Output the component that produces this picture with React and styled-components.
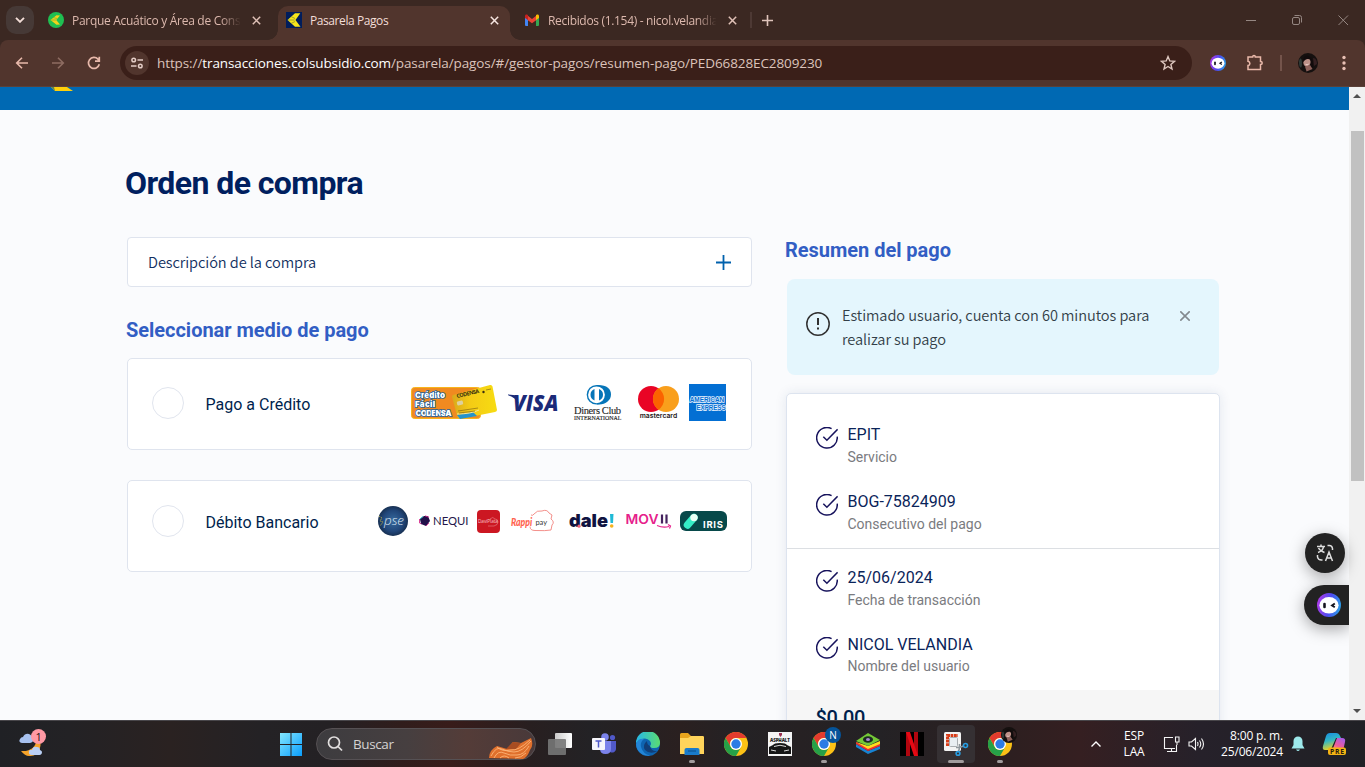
import React from "react";
import styled, { createGlobalStyle, css } from "styled-components";

const Global = createGlobalStyle`
  *, *::before, *::after { box-sizing: border-box; }
  html, body { margin: 0; padding: 0; overflow: hidden; }
  h1, h2, p { margin: 0; }
  svg { display: block; flex: none; }
`;

const ui = `"Open Sans", "Noto Sans", sans-serif`;
const body = `"Noto Sans CJK JP", "Noto Sans", sans-serif`;
const roboto = `Roboto, "Liberation Sans", sans-serif`;

const Screen = styled.div`
  width: 1365px;
  height: 767px;
  display: flex;
  flex-direction: column;
  overflow: hidden;
  font-family: ${ui};
`;

/* ---------- browser chrome ---------- */

const TabStrip = styled.div`
  height: 40px;
  flex: none;
  display: flex;
  align-items: flex-start;
  padding: 6px 0 0 6px;
  background: #3b2822;
`;

const TabSearch = styled.div`
  width: 28px;
  height: 28px;
  border-radius: 10px;
  background: #463936;
  display: grid;
  place-items: center;
`;

const Tab = styled.div`
  position: relative;
  width: ${(p) => p.$w}px;
  height: 34px;
  margin-left: ${(p) => p.$ml || 0}px;
  padding: 0 11px 6px 8px;
  display: flex;
  align-items: center;
  color: ${(p) => (p.$active ? "#f3ded8" : "#ddb9ae")};
  ${(p) =>
    p.$active &&
    css`
      background: #51352d;
      border-radius: 10px 10px 0 0;
      &::before,
      &::after {
        content: "";
        position: absolute;
        bottom: 0;
        width: 10px;
        height: 10px;
      }
      &::before {
        left: -10px;
        background: radial-gradient(circle at 0 0, transparent 9.5px, #51352d 10px);
      }
      &::after {
        right: -10px;
        background: radial-gradient(circle at 100% 0, transparent 9.5px, #51352d 10px);
      }
    `}
`;

const TabTitle = styled.span`
  width: 168px;
  margin: 2px 0 0 8px;
  font-size: 12px;
  line-height: 18px;
  letter-spacing: ${(p) => p.$ls || 0}px;
  white-space: nowrap;
  overflow: hidden;
  ${(p) => p.$fade && css`mask-image: linear-gradient(to right, #000 148px, transparent 169px);`}
`;

const TabClose = styled.span`
  margin-left: auto;
`;

const StripDivider = styled.span`
  width: 2px;
  height: 16px;
  margin: 6px 0 0 2px;
  background: #4d3934;
`;

const NewTab = styled.span`
  margin: 9px 0 0 10px;
`;

const WindowControls = styled.div`
  margin: 8px 16px 0 auto;
  display: flex;
  gap: 34px;
`;

const ToolbarWrap = styled.div`
  height: 47px;
  flex: none;
  background: #3b2822;
`;

const Toolbar = styled.div`
  height: 47px;
  display: flex;
  align-items: center;
  padding: 0 13px 1px 14px;
  background: #51352d;
  border-bottom: 1px solid #5b4139;
  border-radius: 8px 8px 0 0;
`;

const NavIcons = styled.div`
  width: 106px;
  display: flex;
  gap: 20px;
`;

const Omnibox = styled.div`
  width: 1072px;
  height: 34px;
  border-radius: 17px;
  background: #3a1f19;
  display: flex;
  align-items: center;
  padding: 0 16px 0 5px;
`;

const SiteInfo = styled.div`
  width: 24px;
  height: 24px;
  border-radius: 50%;
  background: #51352d;
  display: grid;
  place-items: center;
`;

const Url = styled.span`
  flex: 1;
  margin-left: 8px;
  font-size: 13.5px;
  line-height: 20px;
  letter-spacing: -0.1px;
  color: #dcc3bb;
  white-space: nowrap;
  b {
    font-weight: 400;
    color: #fff;
  }
`;

const Extensions = styled.div`
  flex: 1;
  display: flex;
  align-items: center;
  padding-left: 18px;
`;

const Puzzle = styled.svg`
  margin-left: 20px;
`;

const MenuDots = styled.svg`
  margin-left: 24px;
`;

const ToolDivider = styled.span`
  width: 2px;
  height: 16px;
  margin: 0 16px;
  background: #74544b;
`;

/* ---------- web page ---------- */

const Viewport = styled.div`
  height: 633px;
  flex: none;
  display: flex;
  position: relative;
`;

const Page = styled.div`
  width: 1349px;
  height: 633px;
  overflow: hidden;
  background: #fafbfd;
`;

const SiteHeader = styled.div`
  height: 23px;
  padding-left: 51px;
  background: #0069b3;
`;

const Content = styled.main`
  padding: 53px 0 0 125px;
  font-family: ${roboto};
`;

const Title = styled.h1`
  font-size: 32px;
  line-height: 40px;
  letter-spacing: -0.58px;
  font-weight: 700;
  color: #001f5f;
`;

const Columns = styled.div`
  display: flex;
  gap: 34px;
  padding: 34px 0 0 2px;
`;

const Left = styled.section`
  width: 625px;
`;

const Right = styled.section`
  width: 434px;
  padding-top: 1px;
`;

const Heading = styled.h2`
  margin-left: -1px;
  font-size: 20px;
  line-height: 24px;
  font-weight: 700;
  letter-spacing: -0.03px;
  color: #325ec4;
`;

const Accordion = styled.div`
  height: 50px;
  border: 1px solid #dfe4ee;
  border-radius: 4px;
  background: #fff;
  display: flex;
  align-items: center;
  justify-content: space-between;
  padding: 0 20px;
  margin-bottom: 31px;
  font-family: ${body};
  font-size: 14.6px;
  line-height: 24px;
  font-weight: 350;
  letter-spacing: -0.08px;
  color: #12305f;
`;

const Method = styled.div`
  height: 92px;
  margin-top: ${(p) => p.$mt}px;
  border: 1px solid #dfe4ee;
  border-radius: 5px;
  background: #fff;
  display: flex;
  padding: 27px 23px 0 24px;
`;

const Radio = styled.span`
  width: 32px;
  height: 32px;
  margin-top: ${(p) => p.$mt || 0}px;
  border: 1px solid #e1e5ee;
  border-radius: 50%;
  background: #fff;
`;

const MethodName = styled.span`
  margin: ${(p) => p.$mt}px 0 0 21.5px;
  font-size: 16px;
  line-height: 24px;
  font-weight: 400;
  color: #001f4d;
`;

const Logos = styled.div`
  height: 40px;
  margin: ${(p) => p.$mt}px ${(p) => p.$mr}px 0 auto;
  display: flex;
  align-items: center;
`;

const Logo = styled.svg`
  margin-left: ${(p) => p.$ml || 0}px;
  overflow: visible;
`;

const Notice = styled.div`
  width: 432px;
  height: 96px;
  margin: 17px 0 18px 1px;
  border-radius: 8px;
  background: #e4f6fd;
  display: flex;
  align-items: flex-start;
  padding: 24px 28px 0 19px;
  font-family: ${body};
  font-size: 14.6px;
  line-height: 24px;
  letter-spacing: -0.07px;
  color: #333f48;
  p {
    width: 330px;
    margin-left: 12px;
    font-weight: 350;
  }
`;

const NoticeIcon = styled.svg`
  margin-top: 9px;
`;

const NoticeClose = styled.svg`
  margin: 7.5px 0 0 8px;
`;

const Summary = styled.div`
  width: 434px;
  height: 420px;
  border: 1px solid #dde4ef;
  border-radius: 5px;
  background: #fff;
  box-shadow: 0 0 12px rgba(30, 60, 110, 0.1);
  overflow: hidden;
`;

const SummaryGroup = styled.div`
  height: ${(p) => p.$h}px;
  padding: ${(p) => p.$pt}px 0 0 29px;
  border-bottom: ${(p) => (p.$line ? "1px solid #dcdfe3" : "0")};
`;

const Entry = styled.div`
  height: 67px;
  display: flex;
  gap: 9.5px;
  svg { margin-top: 4px; }
`;

const EntryValue = styled.div`
  padding-top: 1px;
  font-size: 16px;
  line-height: 22px;
  color: #0a2459;
`;

const EntryLabel = styled.div`
  margin-top: ${(p) => p.$mt ?? 0}px;
  font-size: 14px;
  line-height: 22px;
  color: #7a7b80;
`;

const Total = styled.div`
  height: 140px;
  padding: 16px 28.5px;
  background: #f6f6f6;
  font-size: 20px;
  line-height: 24px;
  font-weight: 500;
  letter-spacing: -0.3px;
  color: #001f4d;
`;

const ScrollTrack = styled.div`
  width: 16px;
  background: #f1f1f1;
  display: flex;
  flex-direction: column;
  align-items: center;
  justify-content: space-between;
  padding: 7px 0;
`;

const ScrollThumb = styled.div`
  width: 13px;
  height: 350px;
  margin: 33px 0 auto 1px;
  background: #c1c1c1;
`;

const FloatButton = styled.div`
  position: absolute;
  right: ${(p) => p.$right}px;
  top: ${(p) => p.$top}px;
  width: ${(p) => p.$w}px;
  height: 40px;
  border-radius: ${(p) => (p.$pill ? "20px 0 0 20px" : "50%")};
  background: #222;
  box-shadow: 0 4px 16px rgba(0, 0, 0, 0.35);
  clip-path: ${(p) => (p.$pill ? "inset(-60px 0 -60px -60px)" : "none")};
  display: flex;
  align-items: center;
  justify-content: ${(p) => (p.$pill ? "flex-start" : "center")};
  padding-left: ${(p) => (p.$pill ? 13 : 0)}px;
`;

/* ---------- taskbar ---------- */

const Taskbar = styled.div`
  height: 47px;
  flex: none;
  display: flex;
  align-items: center;
  border-top: 1px solid #48464a;
  background: linear-gradient(
    to right,
    #202125 0, #232225 70px, #2a2221 170px, #242225 260px, #242124 330px,
    #301d1c 400px, #381c1a 450px, #281f20 530px, #232225 590px, #2a2020 680px,
    #242225 740px, #262123 800px, #242225 880px, #2d1f20 1010px, #351f21 1080px,
    #26212a 1200px, #202125 1365px
  );
  color: #fff;
`;

const Weather = styled.div`
  width: 269px;
  flex: none;
  padding-left: 18px;
`;

const AppSlot = styled.div`
  width: 44px;
  height: 46px;
  flex: none;
  display: grid;
  place-items: center;
  position: relative;
`;

const SnipTile = styled.div`
  width: 38px;
  height: 38px;
  border-radius: 4px;
  background: #353033;
  display: grid;
  place-items: center;
`;

const RunMark = styled.span`
  position: absolute;
  left: ${(p) => 22 - p.$w / 2}px;
  bottom: 4px;
  width: ${(p) => p.$w}px;
  height: 3px;
  border-radius: 2px;
  background: #a19c9d;
`;

const Search = styled.div`
  width: 220px;
  height: 32px;
  flex: none;
  margin: 0 2px 0 3px;
  border-radius: 16px;
  border: 1px solid #565154;
  background: linear-gradient(to right, #3d3c3f 0, #463f40 90px, #543c38 150px, #48393a 220px);
  display: flex;
  align-items: center;
  padding: 0 1px 0 10px;
  span {
    margin-left: 10px;
    font-size: 13.5px;
    line-height: 20px;
    letter-spacing: -0.4px;
    color: #d5d2d2;
  }
  svg:last-child { margin: 8px 0 0 auto; }
`;

const Tray = styled.div`
  flex: 1;
  display: flex;
  align-items: center;
  padding-left: 69px;
`;

const TrayText = styled.div`
  width: ${(p) => p.$w}px;
  margin-left: ${(p) => p.$ml}px;
  font-size: 12px;
  line-height: 16px;
  text-align: ${(p) => p.$align};
  letter-spacing: -0.18px;
  white-space: nowrap;
`;

const TrayIcon = styled.div`
  margin-left: ${(p) => p.$ml}px;
`;

/* ---------- drawings ---------- */

const Cross = ({ s = 9, c = "#e0c1b7", w = 1.5 }) => (
  <svg width={s} height={s} viewBox="0 0 9 9" stroke={c} strokeWidth={w} fill="none">
    <path d="M.8.8l7.4 7.4M8.2.8L.8 8.2" />
  </svg>
);

const Plus = ({ s, c, w }) => (
  <svg width={s} height={s} viewBox={`0 0 ${s} ${s}`} stroke={c} strokeWidth={w}>
    <path d={`M0 ${s / 2}H${s}M${s / 2} 0V${s}`} />
  </svg>
);

const ParkFavicon = () => (
  <svg width="16" height="16" viewBox="0 0 16 16">
    <circle cx="8" cy="8" r="8" fill="#1fbf52" />
    <path d="M2.500 8l6-4.800 3.500.3-3.800 4.500 3.800 4.500-3.500.3z" fill="#f2d21b" />
    <path d="M2 8h6M5 5.500l4 1" stroke="#7ab52c" strokeWidth=".7" />
  </svg>
);

const PagosFavicon = () => (
  <svg width="16" height="16" viewBox="0 0 16 16">
    <path fill="#001d5c" d="M0 0h16v16H0z" />
    <path d="M1.500 8L9 1.200h5.300L9.500 8l5 6.800H9z" fill="#f6e51b" />
    <path d="M2 8h6.500M5 4.500l4 2M5 11.500l4-2" stroke="#7d8430" strokeWidth=".7" />
  </svg>
);

const Gmail = () => (
  <svg width="16" height="16" viewBox="0 0 16 16">
    <path fill="#4285f4" d="M1 5l3 2v7H2a1 1 0 0 1-1-1z" />
    <path fill="#34a853" d="M15 5l-3 2v7h2a1 1 0 0 0 1-1z" />
    <path fill="#ea4335" d="M3.500 3.500L8 7l4.500-3.500V8L8 11.200 3.500 8z" />
    <path fill="#c5221f" d="M1 6V4c0-1.700 1.500-2 2.500-1.200L4 3.200V8z" />
    <path fill="#fbbc04" d="M15 6V4c0-1.700-1.500-2-2.500-1.200l-.5.4V8z" />
  </svg>
);

const Bot = ({ s }) => (
  <svg width={s} height={s} viewBox="0 0 24 24">
    <defs>
      <linearGradient id={`bot${s}`} x1="0" y1=".6" x2="1" y2=".8">
        <stop offset="0" stopColor="#a63be8" />
        <stop offset=".5" stopColor="#4b4cf0" />
        <stop offset="1" stopColor="#27a8e6" />
      </linearGradient>
    </defs>
    <circle cx="12" cy="12" r="12" fill={`url(#bot${s})`} />
    <ellipse cx="12" cy="12.300" rx="9.600" ry="8.300" fill="#fff" />
    <path d="M7.500 11v3" stroke="#15151f" strokeWidth="2.600" strokeLinecap="round" />
    <path d="M17.800 10.500l-2.800 2 2.800 1.800" stroke="#15151f" strokeWidth="1.900" fill="none" />
  </svg>
);

const Face = ({ s }) => (
  <svg width={s} height={s} viewBox="0 0 20 20">
    <circle cx="10" cy="10" r="10" fill="#15100f" />
    <path d="M1 8c1-4 3-3 3 2s-1 5-2 4-1-3-1-6z" fill="#2e3936" />
    <path d="M15 5c3 0 4 3 4 6l-3 2z" fill="#352022" />
    <ellipse cx="9" cy="9" rx="3.600" ry="4.600" fill="#bd9188" transform="rotate(15 9 9)" />
    <path d="M7 13.500l5-1.500 2.500 4-6 2.500z" fill="#8e625b" />
    <path d="M5 9C5 4 8 1 12 4c3 2 3 6 3 11l-2-2c0-4 0-7-3-7-2 0-3 1-5 3z" fill="#120b0c" />
    <path d="M7.500 11.300q1.500 1.200 3.200-.2" stroke="#f1d8d2" strokeWidth=".9" fill="none" />
  </svg>
);

const CheckMark = () => (
  <svg width="22" height="22" viewBox="0 0 22 22" fill="none" stroke="#17135c" strokeWidth="1.500">
    <path d="M15.600 1.600A10.300 10.300 0 1 0 21.200 9.700" />
    <path d="M7.300 9.800l3.600 3.500L21.600 2.400" />
  </svg>
);

const Chrome = () => (
  <svg width="24" height="24" viewBox="0 0 24 24">
    <circle cx="12" cy="12" r="12" fill="#fbc116" />
    <path d="M1.600 6A12 12 0 0 1 22.400 6H12a6 6 0 0 0-5.200 9z" fill="#e33b2e" />
    <path d="M1.600 6A12 12 0 0 0 12 24l5.200-9A6 6 0 0 1 6.800 15z" fill="#26a148" />
    <circle cx="12" cy="12" r="6" fill="#fff" />
    <circle cx="12" cy="12" r="4.700" fill="#2c7be5" />
  </svg>
);

const Badge = styled.span`
  position: absolute;
  left: ${(p) => p.$x}px;
  top: ${(p) => p.$y}px;
  width: 16px;
  height: 16px;
  border-radius: 50%;
  background: ${(p) => p.$bg || "none"};
  display: grid;
  place-items: center;
  font-size: 10px;
  line-height: 16px;
  color: #fff;
`;

const BrowserTop = () => (
  <>
    <TabStrip>
      <TabSearch>
        <svg width="10" height="6" viewBox="0 0 10 6" fill="none" stroke="#f3ded8" strokeWidth="1.900"><path d="M1 .8l4 4 4-4" /></svg>
      </TabSearch>
      <Tab $w={232} $ml={6}>
        <ParkFavicon />
        <TabTitle $fade $ls={-0.3}>Parque Acuático y Área de Conservación</TabTitle>
        <TabClose><Cross /></TabClose>
      </Tab>
      <Tab $w={232} $active $ml={6}>
        <PagosFavicon />
        <TabTitle $ls={-0.42}>Pasarela Pagos</TabTitle>
        <TabClose><Cross c="#f7e6e1" /></TabClose>
      </Tab>
      <Tab $w={232} $ml={6}>
        <Gmail />
        <TabTitle $fade $ls={-0.32}>Recibidos (1.154) - nicol.velandia</TabTitle>
        <TabClose><Cross /></TabClose>
      </Tab>
      <StripDivider />
      <NewTab><Plus s={11} c="#dfc4bb" w={1.6} /></NewTab>
      <WindowControls>
        <svg width="12" height="12" stroke="#958782" fill="none"><path d="M1 6.500h10" /></svg>
        <svg width="12" height="12" stroke="#958782" fill="none"><rect x="1.500" y="3.500" width="7" height="7" rx="1.500" /><path d="M3.500 1.500h5a2 2 0 0 1 2 2v5" /></svg>
        <svg width="12" height="12" stroke="#958782" fill="none"><path d="M1.500 1.500l9.500 9.500M11 1.500L1.500 11" /></svg>
      </WindowControls>
    </TabStrip>
    <ToolbarWrap>
      <Toolbar>
        <NavIcons>
          <svg width="16" height="16" stroke="#e8b9ab" strokeWidth="1.600" fill="none"><path d="M14 8H3M8 2.700L2.700 8 8 13.300" /></svg>
          <svg width="16" height="16" stroke="#8e6c62" strokeWidth="1.600" fill="none"><path d="M2 8h11M8 2.700L13.300 8 8 13.300" /></svg>
          <svg width="16" height="16" stroke="#e8b9ab" strokeWidth="1.700" fill="none"><path d="M13.300 9.300A5.500 5.500 0 1 1 12 4.200L13.300 5.700M13.300 1.800v4.400H9" /></svg>
        </NavIcons>
        <Omnibox>
          <SiteInfo>
            <svg width="14" height="14" stroke="#e4cdc6" strokeWidth="1.500" fill="none"><circle cx="3.700" cy="4" r="1.800" /><path d="M7.500 4H13M1 10h5.500" /><circle cx="10.300" cy="10" r="1.800" /></svg>
          </SiteInfo>
          <Url>https://<b>transacciones.colsubsidio.com</b>/pasarela/pagos/#/gestor-pagos/resumen-pago/PED66828EC2809230</Url>
          <svg width="16" height="16" viewBox="0 0 16 16" fill="none" stroke="#dec7bf" strokeWidth="1.400"><path d="M8 1.600l1.800 4.300 4.700.4-3.600 3.100 1.100 4.600L8 11.500 4 14l1.100-4.600L1.500 6.300l4.700-.4z" /></svg>
        </Omnibox>
        <Extensions>
          <Bot s={16} />
          <Puzzle width="18" height="18" viewBox="0 0 18 18" fill="none" stroke="#eab9aa" strokeWidth="1.500">
            <path d="M2 3h4.700C6.700 1 9.300 1 9.300 3H14.500v4.500c2.300 0 2.300 3 0 3v5H2V11.500c2.500-.3 2.500-3.800 0-4.200z" />
          </Puzzle>
          <ToolDivider />
          <Face s={20} />
          <MenuDots width="4" height="16" fill="#e8c0b4"><circle cx="2" cy="2.500" r="1.700" /><circle cx="2" cy="8" r="1.700" /><circle cx="2" cy="13.500" r="1.700" /></MenuDots>
        </Extensions>
      </Toolbar>
    </ToolbarWrap>
  </>
);

const CreditLogos = () => (
  <Logos $mt={-4} $mr={2}>
    <Logo width="86" height="36" viewBox="0 0 86 36">
      <defs>
        <linearGradient id="gold" x1="0" y1="0" x2="1" y2="0"><stop offset="0" stopColor="#d9a81c" /><stop offset=".4" stopColor="#f4cb15" /><stop offset="1" stopColor="#f7dc12" /></linearGradient>
      </defs>
      <rect x=".5" y="3.500" width="69" height="31" rx="3" fill="#f08a20" stroke="#f8b51c" />
      <path d="M42 11L79 1q2-.4 2.500 1.500L86 26q0 1.500-2 2L49 35q-2 0-2.500-2L41 13q0-1.500 1-2z" fill="url(#gold)" />
      <path d="M46 31l16-3 4 4-17 3z" fill="#2593cc" />
      <path d="M46 30q14 0 22-4" stroke="#f7e798" fill="none" />
      <rect x="46" y="17" width="6" height="4" rx="1" fill="#ddd1a0" transform="rotate(-13 49 19)" />
      <path d="M47 27l20-3M75 6l5-1M48 29l16-2" stroke="#876c14" strokeWidth=".7" />
      <circle cx="72.500" cy="8" r="1.200" fill="#382d12" />
      <text x="46" y="14" fontSize="5.500" fontWeight="700" fontFamily="Open Sans" textLength="23" transform="rotate(-13 46 14)" fill="#3b3010">CODENSA</text>
      <g fontFamily="Inter, sans-serif" fontWeight="900" fontSize="8" fill="#fff" stroke="#24629a" strokeWidth="1.500" paintOrder="stroke">
        <text x="4" y="14" textLength="30">Crédito</text>
        <text x="4" y="23" textLength="20">Fácil</text>
        <text x="4.500" y="31.500" textLength="36">CODENSA</text>
      </g>
    </Logo>
    <Logo $ml={11} width="50" height="18" viewBox="0 0 50 18">
      <text x="5" y="17.500" fontFamily="Open Sans" fontWeight="800" fontStyle="italic" fontSize="22.500" textLength="45.500" lengthAdjust="spacingAndGlyphs" fill="#1b2a78">VISA</text>
      <path d="M0 1.500q6 0 8.500 1.500l2 7Q7 4.500 0 2.300z" fill="#1b2a78" />
    </Logo>
    <Logo $ml={16} width="48" height="36" viewBox="0 0 48 36">
      <path d="M24 1c9 0 13 4 13 9.500S32 20.500 25 20.500h-2V1z" fill="#0675b8" />
      <circle cx="22.500" cy="10.800" r="9.800" fill="#0675b8" />
      <circle cx="22.500" cy="10.800" r="8.400" fill="#fff" />
      <path d="M20.500 5v11.600a6.200 6.200 0 0 1 0-11.600zM25 5v11.600a6.200 6.200 0 0 0 0-11.600z" fill="#0675b8" />
      <g fontFamily="Liberation Serif, serif" fill="#242424">
        <text x="0" y="30" fontSize="10.500" textLength="47" stroke="#242424" strokeWidth=".1">Diners Club</text>
        <text x="0" y="36" fontSize="6.300" textLength="47.500" lengthAdjust="spacingAndGlyphs" stroke="#242424" strokeWidth=".15">INTERNATIONAL</text>
      </g>
    </Logo>
    <Logo $ml={16} width="41" height="34" viewBox="0 0 41 34">
      <circle cx="13" cy="14" r="13" fill="#e90425" />
      <circle cx="28" cy="14" r="13" fill="#f99f1c" />
      <path d="M20.500 3.300a13 13 0 0 1 0 21.400 13 13 0 0 1 0-21.400z" fill="#fb6300" />
      <text x="1.700" y="33" fontFamily="Inter, sans-serif" fontWeight="600" fontSize="6.600" textLength="37.500" lengthAdjust="spacingAndGlyphs" fill="#1e1717">mastercard</text>
    </Logo>
    <Logo $ml={10} width="37" height="37" viewBox="0 0 37 37">
      <path fill="#036fd3" d="M0 0h37v37H0z" />
      <g fontFamily="Liberation Sans, sans-serif" fontWeight="700" fontSize="6.500" fill="#036fd3" stroke="#e7f2fd" strokeWidth="1.400" paintOrder="stroke">
        <text x=".7" y="17.800" textLength="34.500" lengthAdjust="spacingAndGlyphs">AMERICAN</text>
        <text x="7.500" y="25.700" textLength="29" lengthAdjust="spacingAndGlyphs">EXPRESS</text>
      </g>
    </Logo>
  </Logos>
);

const DebitLogos = () => (
  <Logos $mt={-7} $mr={1}>
    <Logo width="30" height="30" viewBox="0 0 30 30">
      <defs><radialGradient id="pse"><stop offset="0" stopColor="#376a9e" /><stop offset=".7" stopColor="#214679" /><stop offset="1" stopColor="#173052" /></radialGradient></defs>
      <circle cx="15" cy="15" r="15" fill="url(#pse)" />
      <path d="M1 10l3 2-2 3 3 1-3 4" stroke="#9d9b50" fill="none" strokeDasharray="1.500 .7" />
      <text x="6" y="18.500" fontFamily="Open Sans" fontStyle="italic" fontWeight="300" fontSize="13" textLength="20" lengthAdjust="spacingAndGlyphs" fill="#dbe6f2">pse</text>
    </Logo>
    <Logo $ml={11} width="50" height="12" viewBox="0 0 50 12">
      <path d="M1 4l4-3h4l2 5-4 5-5-2z" fill="#22104a" />
      <path d="M.5 4v4l2 1M6 .8l4 1.500M10 8l-3 3" stroke="#d6308d" strokeWidth=".9" fill="none" />
      <path d="M1 4l3-2.500" stroke="#29bfc7" />
      <text x="14" y="10" fontFamily="Lato, sans-serif" fontSize="10.800" textLength="35.500" lengthAdjust="spacingAndGlyphs" fill="#24164a">NEQUI</text>
    </Logo>
    <Logo $ml={8} width="23" height="23" viewBox="0 0 23 23">
      <rect width="23" height="23" rx="4" fill="#cc1722" />
      <path d="M13 9q3-3 5 0 3 0 3 3t-4 4h-6" stroke="#ed9b9f" strokeWidth=".5" fill="none" />
      <text x="1" y="13.200" fontFamily="Open Sans" fontSize="4.800" textLength="20" fill="#f7c3c6">DaviPlata</text>
    </Logo>
    <Logo $ml={11} width="43" height="22" viewBox="0 0 43 22">
      <path d="M20 5q2 1 3-1 3-4 8-3 5-2 7 2l3 2-1 4q4 3 1 6l-1 5q-5 1-16 .5-5 0-5-4" fill="none" stroke="#f0746d" strokeWidth=".8" />
      <text transform="translate(0 16) scale(1 1.300)" fontFamily="Lato, sans-serif" fontStyle="italic" fontWeight="900" fontSize="8.700" fill="#ff634f">Rappi</text>
      <text x="24.500" y="14.500" fontFamily="Lato, sans-serif" fontSize="7.500" textLength="11.500" fill="#383838">pay</text>
    </Logo>
    <Logo $ml={15} width="44" height="16" viewBox="0 0 44 16">
      <text x="0" y="14.200" fontFamily="Inter, sans-serif" fontWeight="900" fontSize="18" textLength="39" lengthAdjust="spacingAndGlyphs" fill="#101341">dale</text>
      <path d="M41 1h3.500l-.5 9h-2.500z" fill="#1fbad6" />
      <circle cx="42.700" cy="13" r="1.800" fill="#f4b31d" />
      <circle cx="10" cy="13.200" r="1.600" fill="#ef647b" />
    </Logo>
    <Logo $ml={13} width="45" height="16" viewBox="0 0 45 16">
      <text x="-.5" y="11" fontFamily="Inter, sans-serif" fontWeight="600" fontSize="13" textLength="33" lengthAdjust="spacingAndGlyphs" fill="#e6208b">MOV</text>
      <path d="M36 1.500v9M40.500 1.500v9" stroke="#45235f" strokeWidth="2.200" />
      <path d="M31 12.500q6 2.500 12 1M42 11.500l2.500 1.500-1 2.500" stroke="#e6208b" strokeWidth="1.200" fill="none" />
    </Logo>
    <Logo $ml={9} width="47" height="20" viewBox="0 0 47 20">
      <rect width="47" height="20" rx="6" fill="#07494a" />
      <path d="M7.500 14L14 6.500" stroke="#35edc6" strokeWidth="7.500" strokeLinecap="round" />
      <circle cx="14" cy="6.600" r="3.700" fill="#eafff5" />
      <text x="23" y="17" fontFamily="Inter, sans-serif" fontWeight="700" fontSize="9.500" textLength="20" fill="#fff">IRIS</text>
    </Logo>
  </Logos>
);

const Item = ({ value, label, mt }) => (
  <Entry>
    <CheckMark />
    <div>
      <EntryValue>{value}</EntryValue>
      <EntryLabel $mt={mt}>{label}</EntryLabel>
    </div>
  </Entry>
);

const PaymentPage = () => (
  <Viewport>
    <Page>
      <SiteHeader>
        <svg width="22" height="4" viewBox="0 0 22 4"><path d="M0 0h16l6 4H4z" fill="#ffd00a" /><path d="M0 0h3l1 4z" fill="#5f8555" /></svg>
      </SiteHeader>
      <Content>
        <Title>Orden de compra</Title>
        <Columns>
          <Left>
            <Accordion>Descripción de la compra<Plus s={15} c="#0061ad" w={1.8} /></Accordion>
            <Heading>Seleccionar medio de pago</Heading>
            <Method $mt={16}>
              <Radio $mt={0.5} />
              <MethodName $mt={7}>Pago a Crédito</MethodName>
              <CreditLogos />
            </Method>
            <Method $mt={30}>
              <Radio $mt={-3.5} />
              <MethodName $mt={3}>Débito Bancario</MethodName>
              <DebitLogos />
            </Method>
          </Left>
          <Right>
            <Heading>Resumen del pago</Heading>
            <Notice>
              <NoticeIcon width="24" height="24" viewBox="0 0 24 24" fill="none" stroke="#303030" strokeWidth="1.500"><circle cx="12" cy="12" r="11.200" /><path d="M12 6v7M12 15.500v2" strokeWidth="2" /></NoticeIcon>
              <p>Estimado usuario, cuenta con 60 minutos para realizar su pago</p>
              <NoticeClose width="10" height="10" viewBox="0 0 10 10" stroke="#83898e" strokeWidth="1.600"><path d="M.3.3l9.400 9.400M9.700.3L.3 9.700" /></NoticeClose>
            </Notice>
            <Summary>
              <SummaryGroup $h={155} $pt={29} $line>
                <Item value="EPIT" label="Servicio" />
                <Item value="BOG-75824909" label="Consecutivo del pago" />
              </SummaryGroup>
              <SummaryGroup $h={141} $pt={17}>
                <Item value="25/06/2024" label="Fecha de transacción" />
                <Item value="NICOL VELANDIA" label="Nombre del usuario" mt={-1} />
              </SummaryGroup>
              <Total>$0.00</Total>
            </Summary>
          </Right>
        </Columns>
      </Content>
    </Page>
    <ScrollTrack>
      <svg width="8" height="4"><path d="M0 4l4-4 4 4z" fill="#505050" /></svg>
      <ScrollThumb />
      <svg width="8" height="4"><path d="M0 0l4 4 4-4z" fill="#505050" /></svg>
    </ScrollTrack>
    <FloatButton $right={20} $top={446} $w={40}>
      <svg width="18" height="18" viewBox="0 0 18 18" fill="none" stroke="#dedede" strokeWidth="1.500">
        <path d="M1 2.500h8M5 .5v2M2 8.500Q7 7 7.500 2.500M2.500 4Q4 7 8.500 8.500M11.500 1.500h2q2.500 0 3 3v1.500M1.500 11v2q.5 3 4 3h1M9.500 17l3.500-9 3.500 9M10.700 14h4.600" />
      </svg>
    </FloatButton>
    <FloatButton $right={16} $top={498} $w={45} $pill><Bot s={24} /></FloatButton>
  </Viewport>
);

const WindowsBar = () => (
  <Taskbar>
    <Weather>
      <svg width="30" height="30" viewBox="0 0 30 30">
        <path d="M19 10q5 3 3 9-3 9-11 8-4 0-8-5 14 1 16-12z" fill="#f5a32a" />
        <path d="M4 14q-4-1-2-4 1-2 3-2 2-4 6-3 3 1 3 4 3 4-2 5z" fill="#a7c1ef" />
        <path d="M14 26q-4 0-3-4 1-2 3-1 1-4 5-3 3 0 3 3 3 1 1.500 4-1 1-2 1z" fill="#b9cff5" />
        <circle cx="20.500" cy="7.500" r="7.500" fill="#ff99a4" />
        <text x="17.500" y="11.500" fontFamily="Open Sans" fontSize="11" fill="#1c1113">1</text>
      </svg>
    </Weather>
    <AppSlot>
      <svg width="24" height="24" viewBox="0 0 24 24">
        <defs><linearGradient id="win" x1="0" y1="0" x2="1" y2="1"><stop offset="0" stopColor="#83e7ff" /><stop offset="1" stopColor="#0a9dfb" /></linearGradient></defs>
        <path fill="url(#win)" d="M1 1h10.500v11H1zM12.500 1H23v11H12.500zM1 13h10.500v11H1zM12.500 13H23v11H12.500z" />
      </svg>
    </AppSlot>
    <Search>
      <svg width="16" height="16" fill="none" stroke="#e2dfdf" strokeWidth="1.700"><circle cx="7" cy="6.500" r="5.500" /><path d="M11 10.500l4 4" /></svg>
      <span>Buscar</span>
      <svg width="46" height="22" viewBox="0 0 46 22">
        <path d="M1 21q0-8 8-12l10 3 6-7 8 1 10-5q3 7-1 12-3 8-7 9z" fill="#e0702c" />
        <path d="M18 12l7-7 8 1-5 6z" fill="#a84d22" />
        <path d="M3 19q5-10 11-7t12 3q8 0 17-11M6 21q4-8 10-5t13 2q7 0 12-9M12 21q4-4 9 0M27 21q6 0 11-5M9 10q5 5 14 3 7 1 19-10" stroke="#ffbc80" strokeWidth=".8" fill="none" />
      </svg>
    </Search>
    <AppSlot>
      <svg width="26" height="24" viewBox="0 0 26 24"><defs><linearGradient id="tv"><stop stopColor="#c9c9c9" /><stop offset="1" stopColor="#fff" /></linearGradient></defs><rect x="8" y="1" width="17" height="15" rx="1" fill="url(#tv)" /><rect x="1" y="7" width="18" height="16" rx="1" fill="#777" opacity=".9" /></svg>
    </AppSlot>
    <AppSlot>
      <svg width="24" height="24" viewBox="0 0 24 24"><circle cx="13" cy="5" r="3.800" fill="#7b83eb" /><circle cx="20.500" cy="5.500" r="2.600" fill="#5059c9" /><path d="M16 9h8v7a4 4 0 0 1-6 4z" fill="#5059c9" /><path d="M8 9h11v8q0 5-5.500 5T8 17z" fill="#7b83eb" /><rect x="0" y="6" width="13" height="12" rx="1" fill="#f6f6fb" /><path d="M3.500 9h6M6.500 9v6.500" stroke="#5059c9" strokeWidth="1.500" /></svg>
    </AppSlot>
    <AppSlot>
      <svg width="24" height="24" viewBox="0 0 24 24"><defs><linearGradient id="edge" x2="1"><stop stopColor="#26b7e8" /><stop offset="1" stopColor="#5bdc70" /></linearGradient></defs><circle cx="12" cy="12" r="12" fill="#0e64b1" /><path d="M0 11A12 12 0 0 1 24 11q0 5-6 5-4 0-4-2 2-2 0-5Q9 3 0 11z" fill="url(#edge)" /><path d="M0 12q2-6 8-5-4 3-3 8 2 7 9 8.500A12 12 0 0 1 0 12z" fill="#2385d6" /><path d="M14 14q-3-1-3-5-5 4-2 9 5 5 13 1-7 1-8-5z" fill="#103e78" /></svg>
    </AppSlot>
    <AppSlot>
      <svg width="24" height="22" viewBox="0 0 24 22"><path d="M0 1.500Q0 0 1.500 0H8l3 3h11.500q1.500 0 1.500 1.500V21H0z" fill="#e8a51d" /><path d="M0 5h8l3-2h12l1 1v17H0z" fill="#ffd45b" /><path d="M4.500 22v-5q0-2 2-2h11q2 0 2 2v5z" fill="#197bcb" /><path d="M8 18h8" stroke="#0b4e88" /></svg>
      <RunMark $w={6} />
    </AppSlot>
    <AppSlot><Chrome /></AppSlot>
    <AppSlot>
      <svg width="24" height="24" viewBox="0 0 24 24"><path fill="#f4f4f4" d="M0 0h24v24H0z" /><path d="M11 1h3v2l-1.500 2L11 3z" fill="#9c3151" /><text x="2" y="9.500" fontFamily="Open Sans" fontWeight="800" fontSize="4.500" textLength="20" fill="#222">ASPHALT</text><path d="M1 22v-7l4-2q1-2 7-2t7 2l4 2v7z" fill="#161616" /><path d="M6 14.500q6-2.500 12 0M3 18l5 1M21 18l-5 1" stroke="#d9d9d9" strokeWidth="1" fill="none" /></svg>
    </AppSlot>
    <AppSlot><Chrome /><Badge $x={23} $y={6} $bg="#05549a">N</Badge><RunMark $w={6} /></AppSlot>
    <AppSlot>
      <svg width="24" height="22" viewBox="0 0 24 22"><path d="M0 14l12 7 12-5v-3L12 18 0 11z" fill="#1783d2" /><path d="M0 11l12 7 12-5v-3L12 15 0 9z" fill="#ed2e32" /><path d="M0 9l12 7 12-5V8L12 13z" fill="#ffdc1e" /><path d="M0 8l12-8 12 7-12 6z" fill="#74c936" /><ellipse cx="12" cy="6.500" rx="5" ry="3.200" fill="#1d2a25" /><ellipse cx="12" cy="6.500" rx="2" ry="1.500" fill="#a88bd0" /></svg>
    </AppSlot>
    <AppSlot>
      <svg width="24" height="24" viewBox="0 0 24 24"><path d="M0 0h24v24H0z" /><path d="M6 0h4v24H6zM14 0h4v24h-4z" fill="#b1060f" /><path d="M6 0h4l8 24h-4z" fill="#e50914" /></svg>
    </AppSlot>
    <AppSlot>
      <SnipTile>
        <svg width="26" height="24" viewBox="0 0 26 24">
          <rect x="1" y="0" width="17" height="19" rx="1.500" fill="#f3f3f3" />
          <path d="M4.500 14V3.500H15" stroke="#d83b17" strokeWidth="3" strokeDasharray="2.800 .6" fill="none" />
          <rect x="6.500" y="5.500" width="8" height="9" rx="1" fill="#e9eef2" stroke="#a9adb0" />
          <path d="M13 15.500h3.500l4-1.500M16.500 12v4l-1 3.500" stroke="#8f979d" strokeWidth="1.600" fill="none" />
          <circle cx="22.500" cy="13.500" r="2" fill="none" stroke="#289de2" strokeWidth="1.600" />
          <circle cx="15" cy="21.500" r="1.900" fill="none" stroke="#289de2" strokeWidth="1.600" />
        </svg>
      </SnipTile>
      <RunMark $w={16} />
    </AppSlot>
    <AppSlot><Chrome /><Badge $x={23} $y={6}><Face s={16} /></Badge><RunMark $w={6} /></AppSlot>
    <Tray>
      <svg width="10" height="6" fill="none" stroke="#fff" strokeWidth="1.400"><path d="M.5 5.500l4.500-4.500 4.500 4.500" /></svg>
      <TrayText $w={28} $ml={19} $align="center">ESP<br />LAA</TrayText>
      <TrayIcon $ml={15}>
        <svg width="17" height="17" fill="none" stroke="#f3f3f3" strokeWidth="1.100"><path d="M10 1.500H1.500v11H12M13.500 9v6.500H4M8.500 12.500v3M12.500 1h3.500v5h-3.500zM14 6v3" /></svg>
      </TrayIcon>
      <TrayIcon $ml={8}>
        <svg width="17" height="14" fill="none" stroke="#f3f3f3" strokeWidth="1.100"><path d="M1 5h2.500L7.500 1.500v11L3.500 9H1zM9.500 5q1 2 0 4M11.500 3.500q2.500 3.500 0 7M13.500 1.500q4 5.500 0 11" /></svg>
      </TrayIcon>
      <TrayText $w={70} $ml={8} $align="right">8:00 p. m.<br />25/06/2024</TrayText>
      <TrayIcon $ml={8}>
        <svg width="14" height="16" fill="#9de9eb"><path d="M2.500 5a4.500 4.500 0 0 1 9 0v4l2 3.500H.5l2-3.500zM5 13.500h4Q7 16.500 5 13.500z" /></svg>
      </TrayIcon>
      <TrayIcon $ml={16}>
        <svg width="26" height="24" viewBox="0 0 26 24"><defs><linearGradient id="cpA" x2=".3" y2="1"><stop stopColor="#158be4" /><stop offset=".5" stopColor="#32b7c3" /><stop offset="1" stopColor="#e7d326" /></linearGradient><linearGradient id="cpB" x1=".8" x2=".2" y2="1"><stop stopColor="#a55ce8" /><stop offset=".6" stopColor="#ef5b98" /><stop offset="1" stopColor="#ffa06c" /></linearGradient></defs><path d="M5 4q1-3 4-3h6q3 0 4 3l1 2h-5l-4 9q-1 3-4 3H4q-3 0-2-4z" fill="url(#cpA)" /><path d="M16 6h5q4 0 3 4l-2 9H11z" fill="url(#cpB)" /><rect x="7" y="15.500" width="18" height="7.500" rx="2" fill="#f4b414" /><text x="9" y="21.700" fontFamily="Open Sans" fontWeight="700" fontSize="6.800" textLength="14" fill="#271c0b">PRE</text></svg>
      </TrayIcon>
    </Tray>
  </Taskbar>
);

export default function App() {
  return (
    <Screen>
      <Global />
      <BrowserTop />
      <PaymentPage />
      <WindowsBar />
    </Screen>
  );
}
